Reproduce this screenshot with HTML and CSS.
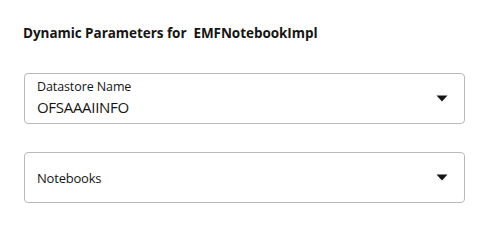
FILE: index.html
```html
<!DOCTYPE html>
<html>
<head>
<meta charset="utf-8">
<link rel="stylesheet" href="styles.css">
</head>
<body>
<div class="page">
  <h1 class="title">Dynamic Parameters for&nbsp; EMFNotebookImpl</h1>
  <div class="fields">
    <div class="select">
      <div class="select-text">
        <span class="label">Datastore Name</span>
        <span class="value">OFSAAAIINFO</span>
      </div>
      <svg class="arrow" width="12" height="7" viewBox="0 0 12 7"><path d="M0.5 0.5 L11.5 0.5 L6 6.5 Z" fill="#161513"/></svg>
    </div>
    <div class="select">
      <div class="select-text">
        <span class="placeholder">Notebooks</span>
      </div>
      <svg class="arrow" width="12" height="7" viewBox="0 0 12 7"><path d="M0.5 0.5 L11.5 0.5 L6 6.5 Z" fill="#161513"/></svg>
    </div>
  </div>
</div>
</body>
</html>
```
FILE: styles.css
```css
html, body {
  margin: 0;
  padding: 0;
  background: #ffffff;
}
body {
  font-family: "Open Sans", "Noto Sans", sans-serif;
  color: #161513;
}
.page {
  padding: 25px 29px 0 24px;
  display: flex;
  flex-direction: column;
}
.title {
  margin: 0 0 0 -1px;
  font-size: 13.5px;
  font-weight: 700;
  line-height: 16px;
  letter-spacing: -0.05px;
}
.fields {
  margin-top: 32px;
  display: flex;
  flex-direction: column;
  gap: 28px;
}
.select {
  height: 51px;
  box-sizing: border-box;
  border: 1px solid #b9b9b9;
  border-radius: 4px;
  display: flex;
  align-items: center;
  padding: 0 16px 0 12px;
}
.select-text {
  flex: 1;
  display: flex;
  flex-direction: column;
}
.label {
  font-size: 12.5px;
  line-height: 16px;
  letter-spacing: -0.1px;
}
.value {
  margin-top: 2px;
  font-size: 15px;
  line-height: 21px;
  letter-spacing: -0.3px;
}
.placeholder {
  font-size: 13px;
  line-height: 18px;
  letter-spacing: -0.2px;
}
.arrow {
  display: block;
}
```
